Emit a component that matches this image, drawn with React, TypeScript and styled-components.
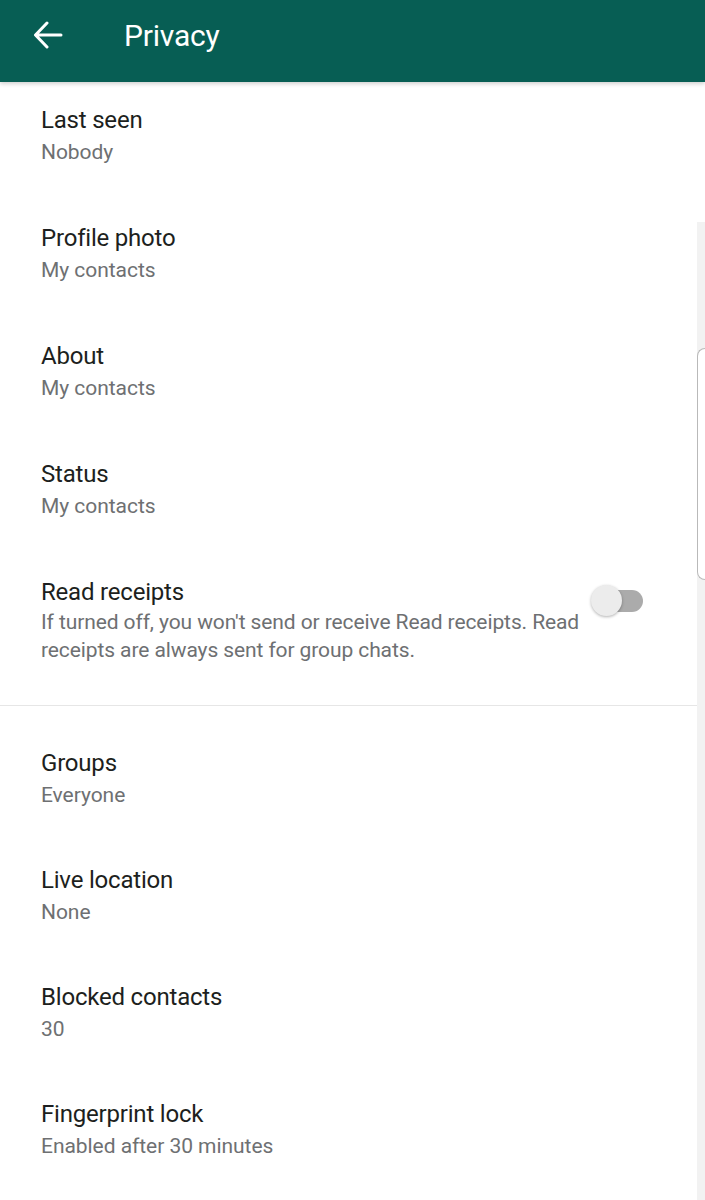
import { styled, createGlobalStyle } from "styled-components";

const GlobalStyle = createGlobalStyle`
  html, body {
    margin: 0;
    padding: 0;
    background: #ffffff;
  }
  body {
    font-family: Roboto, "Noto Sans", sans-serif;
    -webkit-font-smoothing: antialiased;
  }
`;

const Screen = styled.div`
  position: relative;
  width: 705px;
  min-height: 1200px;
  overflow: hidden;
  background: #ffffff;
`;

const Toolbar = styled.header`
  display: flex;
  align-items: center;
  height: 82px;
  box-sizing: border-box;
  padding: 0 0 12px 33px;
  background: #075e54;
  box-shadow: 0 2px 4px rgba(0, 0, 0, 0.18);
  position: relative;
  z-index: 1;
`;

const BackButton = styled.button`
  display: flex;
  align-items: center;
  justify-content: center;
  width: 30px;
  height: 30px;
  padding: 0;
  border: none;
  background: none;
  color: #ffffff;
  cursor: pointer;
`;

const Title = styled.h1`
  margin: 0 0 0 61px;
  font-size: 30px;
  font-weight: 400;
  color: #ffffff;
  letter-spacing: -0.2px;
`;

const Section = styled.section<{ $compact?: boolean }>`
  display: flex;
  flex-direction: column;
  padding-top: ${(p) => (p.$compact ? "19px" : "0")};
`;

const Row = styled.div<{ $compact?: boolean }>`
  display: flex;
  align-items: flex-start;
  gap: 4px;
  padding: 22px 62px ${(p) => (p.$compact ? "31px" : "32px")} 41px;
`;

const RowText = styled.div`
  flex: 1;
  display: flex;
  flex-direction: column;
`;

const Label = styled.div`
  font-size: 24px;
  line-height: 32px;
  color: #1d1f20;
  letter-spacing: -0.2px;
`;

const Value = styled.div`
  font-size: 21px;
  line-height: 32px;
  color: #6e7072;
  letter-spacing: -0.05px;
`;

const Description = styled.div`
  font-size: 21px;
  line-height: 28px;
  color: #6e7072;
  letter-spacing: -0.1px;
  padding-bottom: 9px;
`;

const Divider = styled.hr`
  margin: 0;
  border: none;
  border-top: 1px solid #e6e6e6;
`;

const Switch = styled.div`
  position: relative;
  flex: none;
  width: 52px;
  height: 32px;
  margin-top: 9px;
`;

const Track = styled.div`
  position: absolute;
  left: 10px;
  top: 5px;
  width: 42px;
  height: 22px;
  border-radius: 11px;
  background: #ababab;
`;

const Thumb = styled.div`
  position: absolute;
  left: 0;
  top: 0;
  width: 31px;
  height: 31px;
  border-radius: 50%;
  background: #ececec;
  box-shadow: 0 1px 3px rgba(0, 0, 0, 0.3);
`;

/* Samsung edge-panel strip sitting over the right edge */
const EdgeStrip = styled.div`
  position: absolute;
  right: 0;
  top: 222px;
  bottom: 0;
  width: 8px;
  background: #f2f2f2;
`;

const EdgeHandle = styled.div`
  position: absolute;
  right: 0;
  top: 126px;
  width: 7px;
  height: 230px;
  background: #ffffff;
  border: 1px solid #b9b9b9;
  border-right: none;
  border-radius: 9px 0 0 9px;
`;

interface Item {
  label: string;
  value: string;
}

const top: Item[] = [
  { label: "Last seen", value: "Nobody" },
  { label: "Profile photo", value: "My contacts" },
  { label: "About", value: "My contacts" },
  { label: "Status", value: "My contacts" },
];

const bottom: Item[] = [
  { label: "Groups", value: "Everyone" },
  { label: "Live location", value: "None" },
  { label: "Blocked contacts", value: "30" },
  { label: "Fingerprint lock", value: "Enabled after 30 minutes" },
];

export default function App() {
  return (
    <Screen>
      <GlobalStyle />
      <Toolbar>
        <BackButton aria-label="Back">
          <svg width="30" height="28" viewBox="0 0 30 28" fill="none">
            <path
              d="M28 14H3M14 2L2.5 14L14 26"
              stroke="#ffffff"
              strokeWidth="3"
              strokeLinecap="round"
              strokeLinejoin="round"
            />
          </svg>
        </BackButton>
        <Title>Privacy</Title>
      </Toolbar>

      <Section>
        {top.map((item) => (
          <Row key={item.label}>
            <RowText>
              <Label>{item.label}</Label>
              <Value>{item.value}</Value>
            </RowText>
          </Row>
        ))}
        <Row>
          <RowText>
            <Label>Read receipts</Label>
            <Description>
              If turned off, you won't send or receive Read receipts. Read
              receipts are always sent for group chats.
            </Description>
          </RowText>
          <Switch>
            <Track />
            <Thumb />
          </Switch>
        </Row>
      </Section>

      <Divider />

      <Section $compact>
        {bottom.map((item) => (
          <Row key={item.label} $compact>
            <RowText>
              <Label>{item.label}</Label>
              <Value>{item.value}</Value>
            </RowText>
          </Row>
        ))}
      </Section>

      <EdgeStrip>
        <EdgeHandle />
      </EdgeStrip>
    </Screen>
  );
}
